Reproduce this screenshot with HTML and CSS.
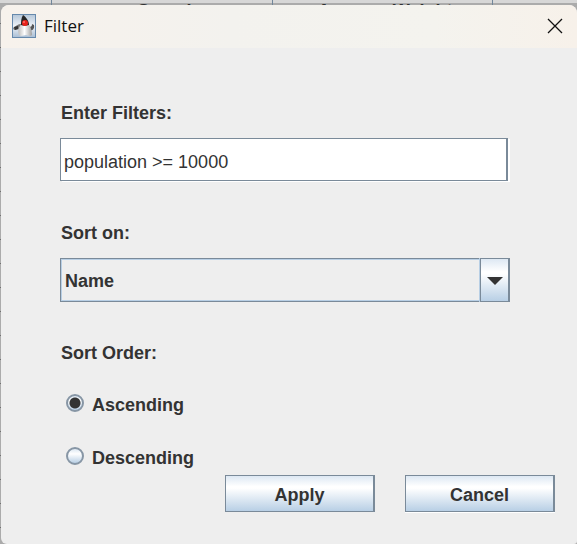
FILE: index.html
```html
<!DOCTYPE html>
<html lang="en">
<head>
<meta charset="utf-8">
<title>Filter</title>
<link rel="stylesheet" href="styles.css">
</head>
<body>
<div class="backdrop" aria-hidden="true">
  <span class="column first"></span>
  <span class="column">Speed</span>
  <span class="column">Average Weight</span>
  <span class="column last"></span>
</div>
<main class="dialog" role="dialog" aria-labelledby="title">
  <header class="titlebar">
    <svg class="app-icon" viewBox="0 0 24 24" aria-hidden="true">
      <defs>
        <linearGradient id="sky" x1="0" y1="0" x2="0" y2="1">
          <stop offset="0" stop-color="#b4c6d8"/>
          <stop offset=".5" stop-color="#eef2f7"/>
          <stop offset="1" stop-color="#a9bed4"/>
        </linearGradient>
        <linearGradient id="belly" x1="0" y1="0" x2="1" y2="0">
          <stop offset="0" stop-color="#bdbdbd"/>
          <stop offset=".45" stop-color="#ffffff"/>
          <stop offset="1" stop-color="#a0a0a0"/>
        </linearGradient>
      </defs>
      <rect x=".5" y=".5" width="23" height="23" fill="url(#sky)" stroke="#6689ac"/>
      <path d="M9 10 C6 10 4 12 1 14 L2 16 L8 15 Z" fill="#777"/>
      <path d="M17 11 C18 14 20 13 20 10 L22 11 C23 15 20 17 18 16 Z" fill="#555"/>
      <path d="M9 11 L17 11 C19 13 20 18 20 21 C18 23 16 21 14 21 C12 21 9 23 7 21 C6 18 6 13 9 11 Z" fill="url(#belly)"/>
      <path d="M11 1 C14 3 17 7 17 11 C14 12 11 12 9 11 C9 8 9 4 11 1 Z" fill="#262626"/>
      <path d="M2 13 L6 12 L6 15 L3 16 Z" fill="#333"/>
      <circle cx="13" cy="9" r="3" fill="#e8221b"/>
      <circle cx="12" cy="8" r="1" fill="#ff766b"/>
    </svg>
    <h1 class="title" id="title">Filter</h1>
    <button class="close" type="button" aria-label="Close">
      <svg class="close-icon" viewBox="0 0 16 16" aria-hidden="true"><path d="M1 1 L15 15 M15 1 L1 15"/></svg>
    </button>
  </header>
  <form class="form">
    <div class="field">
      <label class="label" for="filters">Enter Filters:</label>
      <input class="text-input" id="filters" type="text" value="population &gt;= 10000">
    </div>
    <div class="field">
      <label class="label" for="sort">Sort on:</label>
      <div class="combo">
        <select class="select" id="sort"><option>Name</option></select>
        <span class="combo-arrow"><svg class="arrow-icon" viewBox="0 0 16 8" aria-hidden="true"><path d="M0 0 H16 L8 8 Z"/></svg></span>
      </div>
    </div>
    <fieldset class="group">
      <legend class="label">Sort Order:</legend>
      <label class="choice"><input class="radio" type="radio" name="order" checked>Ascending</label>
      <label class="choice"><input class="radio" type="radio" name="order">Descending</label>
    </fieldset>
    <div class="actions">
      <button class="button" type="button">Apply</button>
      <button class="button raised" type="button">Cancel</button>
    </div>
  </form>
</main>
</body>
</html>
```
FILE: styles.css
```css
* {
  box-sizing: border-box;
}

body {
  margin: 0;
  min-height: 100vh;
  display: flex;
  flex-direction: column;
  background: repeating-linear-gradient(#ababab 0 23px, #707070 23px 24px);
  color: #333;
  font: bold 18px/20px "Liberation Sans", Arial, sans-serif;
}

.backdrop {
  display: grid;
  grid-template-columns: 52px 221px 220px 1fr;
  height: 5px;
  overflow: hidden;
  background: linear-gradient(#d7d7d7 3px, #ababab 3px);
}

.column {
  height: 24px;
  padding: 1px 0 0 5px;
  border-right: 1px solid #71869a;
  text-align: center;
}

.first {
  padding: 0;
}

.last {
  border: 0;
}

.dialog {
  flex: 1;
  margin-left: 1px;
  overflow: hidden;
  border-radius: 8px 8px 3px 6px;
  background: #eee;
}

.titlebar {
  display: flex;
  align-items: center;
  height: 43px;
  padding: 0 14px 2px 11px;
  background: linear-gradient(90deg, #f7f2ec, #f3f2ee 40%, #f4f3ee 75%, #f7f1ea);
}

.app-icon {
  width: 24px;
  height: 24px;
}

.title {
  flex: 1;
  margin: 0 0 0 8px;
  color: #111;
  font: 17px/24px "Open Sans", sans-serif;
}

.close {
  display: flex;
  padding: 0;
  border: 0;
  background: none;
}

.close-icon {
  width: 16px;
  height: 16px;
  fill: none;
  stroke: #111;
  stroke-width: 1.3;
}

.form {
  padding: 55px 22px 0 59px;
}

.field {
  display: flex;
  flex-direction: column;
  gap: 15px;
  margin: 0 45px 41px 0;
}

.label {
  padding: 0 0 0 1px;
}

.text-input {
  width: calc(100% - 2px);
  height: 43px;
  margin-bottom: 1px;
  padding: 6px 3px 0;
  border: 1px solid #7a8a99;
  border-right-width: 2px;
  border-radius: 0;
  outline: 0;
  background: #fff;
  box-shadow: 2px 1px #fff;
  color: #333;
  font: 18px/20px "Liberation Sans", Arial, sans-serif;
}

.combo {
  display: grid;
  grid-template-columns: 1fr 30px;
  height: 44px;
}

.select {
  appearance: none;
  grid-area: 1 / 1 / 2 / 3;
  height: 44px;
  padding: 2px 34px 0 4px;
  border: 1px solid #7a8a99;
  border-radius: 0;
  outline: 0;
  background: #eee;
  box-shadow: inset 1px 1px #b8cfe5, inset 0 -1px #b8cfe5;
  color: #333;
  font: inherit;
}

.combo-arrow {
  grid-area: 1 / 2;
  display: grid;
  place-items: center;
  border: 1px solid #7a8a99;
  border-right-width: 2px;
  background: linear-gradient(#dde8f3, #fff 30%, #fff 35%, #b8cfe5);
  box-shadow: -1px 0 #b8cfe5;
  clip-path: inset(0 0 0 -1px);
  pointer-events: none;
}

.arrow-icon {
  width: 16px;
  height: 8px;
  margin-top: 2px;
  fill: #333;
}

.group {
  display: flex;
  flex-direction: column;
  gap: 33px;
  margin: 0;
  padding: 32px 0 0;
  border: 0;
}

.choice {
  display: flex;
  align-items: center;
  gap: 8px;
  height: 20px;
  padding-left: 6px;
}

.radio {
  appearance: none;
  width: 18px;
  height: 18px;
  margin: 0 0 4px;
  border: 2px solid #8796a5;
  border-radius: 50%;
  background: linear-gradient(#dde8f3, #fff 35%, #b8cfe5);
}

.radio:checked {
  background: radial-gradient(circle, #333 5px, transparent 6px), linear-gradient(#dde8f3, #fff 35%, #b8cfe5);
}

.actions {
  display: flex;
  justify-content: flex-end;
  gap: 30px;
  margin-top: 7px;
}

.button {
  width: 150px;
  height: 37px;
  padding: 2px 0 0;
  border: 1px solid #7a8a99;
  border-right-width: 2px;
  border-radius: 0;
  background: linear-gradient(#dde8f3, #fff 30%, #fff 35%, #b8cfe5);
  color: #333;
  font: inherit;
}

.raised {
  box-shadow: 0 1px #fff;
}
```
